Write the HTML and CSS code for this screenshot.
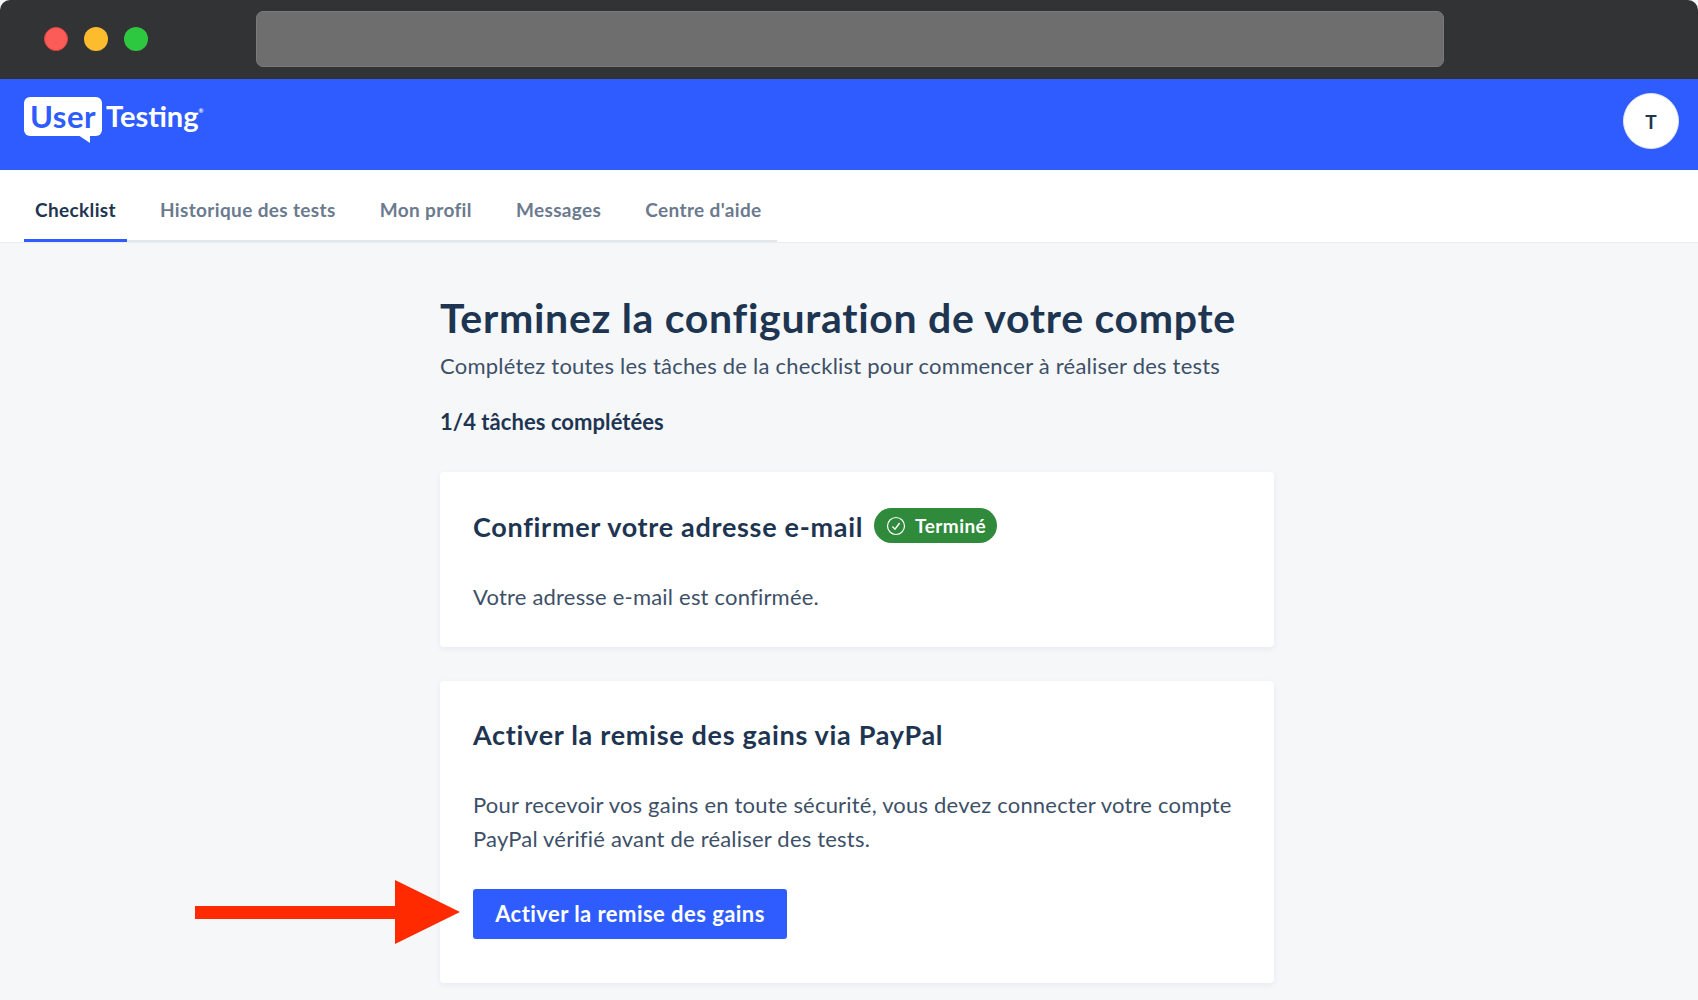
FILE: index.html
```html
<!DOCTYPE html>
<html lang="fr">
<head>
    <meta charset="UTF-8">
    <title>UserTesting - Checklist</title>
    <link rel="stylesheet" href="styles.css">
</head>
<body>
    <div class="window-bar">
        <div class="lights">
            <span class="light light-red"></span>
            <span class="light light-yellow"></span>
            <span class="light light-green"></span>
        </div>
        <div class="url-bar"></div>
    </div>

    <header class="top-bar">
        <div class="logo">
            <span class="logo-user">User</span>
            <span class="logo-testing">Testing<sup class="logo-mark">®</sup></span>
        </div>
        <div class="avatar">T</div>
    </header>

    <nav class="tabs">
        <div class="tab-list">
            <a class="tab active">Checklist</a>
            <a class="tab">Historique des tests</a>
            <a class="tab">Mon profil</a>
            <a class="tab">Messages</a>
            <a class="tab">Centre d'aide</a>
        </div>
    </nav>

    <main class="content">
        <h1>Terminez la configuration de votre compte</h1>
        <p class="subtitle">Complétez toutes les tâches de la checklist pour commencer à réaliser des tests</p>
        <p class="progress">1/4 tâches complétées</p>

        <section class="card">
            <div class="card-head">
                <h2>Confirmer votre adresse e-mail</h2>
                <span class="badge">
                    <svg class="badge-icon" viewBox="0 0 20 20" fill="none" stroke="currentColor">
                        <circle cx="10" cy="10" r="8.5" stroke-width="1.2"/>
                        <path d="M6.4 10.4l2.6 2.8 4.6-6.2" stroke-width="1.4"/>
                    </svg>
                    Terminé
                </span>
            </div>
            <p class="card-text">Votre adresse e-mail est confirmée.</p>
        </section>

        <section class="card card-paypal">
            <div class="card-head">
                <h2>Activer la remise des gains via PayPal</h2>
            </div>
            <p class="card-text">Pour recevoir vos gains en toute sécurité, vous devez connecter votre compte PayPal vérifié avant de réaliser des tests.</p>
            <button class="primary-button">Activer la remise des gains</button>
            <svg class="arrow" viewBox="0 0 265 64">
                <path d="M0 26h200V0l65 32-65 32V39H0z" fill="#ff2a00"/>
            </svg>
        </section>
    </main>
</body>
</html>
```

FILE: styles.css
```css
:root {
    --blue: #2f5cff;
    --navy: #1e3552;
    --slate: #3d5068;
    --muted: #6b7a8e;
    --page-bg: #f5f7f9;
}

* {
    margin: 0;
    padding: 0;
    box-sizing: border-box;
}

body {
    font-family: Lato, "Open Sans", sans-serif;
    color: var(--navy);
    background-color: var(--page-bg);
    height: 1000px;
    overflow: hidden;
}

.window-bar {
    display: flex;
    align-items: center;
    height: 79px;
    padding: 0 254px 1px 44px;
    border-radius: 10px 10px 0 0;
    background-color: #323335;
}

.lights {
    display: flex;
    gap: 16px;
    margin-right: 108px;
}

.light {
    width: 24px;
    height: 24px;
    border-radius: 50%;
}

.light-red {
    background-color: #fc5c57;
    border: 1px solid #e0443e;
}

.light-yellow {
    background-color: #fdbb2e;
}

.light-green {
    background-color: #2ec840;
}

.url-bar {
    flex: 1;
    height: 56px;
    border-radius: 7px;
    background-color: #6e6e6e;
    border: 1px solid #7a7a7a;
}

.top-bar {
    display: flex;
    justify-content: space-between;
    align-items: flex-start;
    height: 91px;
    padding: 14px 19px 0 24px;
    background-color: var(--blue);
}

.logo {
    display: flex;
    align-items: flex-start;
    gap: 4px;
    padding-top: 4px;
}

.logo-user {
    position: relative;
    display: block;
    width: 78px;
    height: 39px;
    border-radius: 6px;
    background-color: white;
    color: var(--blue);
    font-size: 31px;
    font-weight: 700;
    line-height: 38px;
    letter-spacing: 0.5px;
    text-align: center;
}

.logo-user::after {
    content: "";
    position: absolute;
    left: 54px;
    top: 38px;
    border-top: 8px solid white;
    border-left: 12px solid transparent;
    border-right: 0 solid transparent;
}

.logo-testing {
    color: white;
    font-size: 29px;
    font-weight: 700;
    line-height: 38px;
}

.logo-mark {
    font-size: 6px;
    vertical-align: 14px;
    line-height: 0;
}

.avatar {
    display: flex;
    align-items: center;
    justify-content: center;
    width: 56px;
    height: 56px;
    border-radius: 50%;
    background-color: white;
    border: 1px solid #dfe5f5;
    font-size: 19px;
    font-weight: 700;
}

.tabs {
    height: 73px;
    padding-left: 24px;
    background-color: white;
    border-bottom: 1px solid #e8ebef;
}

.tab-list {
    display: flex;
    gap: 22px;
    width: 753px;
    height: 72px;
    border-bottom: 2px solid #e3e7ec;
}

.tab {
    height: 72px;
    padding: 0 11px;
    color: var(--muted);
    font-size: 19px;
    font-weight: 700;
    line-height: 80px;
    letter-spacing: 0.36px;
}

.tab.active {
    color: var(--navy);
    border-bottom: 3px solid var(--blue);
}

.content {
    width: 834px;
    margin-left: 440px;
    padding-top: 51px;
}

h1 {
    font-size: 41px;
    font-weight: 700;
    line-height: 48px;
    letter-spacing: 0.7px;
}

.subtitle {
    margin-top: 8px;
    color: var(--slate);
    font-size: 22px;
    line-height: 32px;
    letter-spacing: 0.22px;
}

.progress {
    margin-top: 26px;
    font-size: 22px;
    font-weight: 700;
    line-height: 28px;
    letter-spacing: 0.06px;
}

.card {
    position: relative;
    margin-top: 36px;
    padding: 37px 33px 33px;
    border-radius: 4px;
    background-color: white;
    box-shadow: 0 2px 6px rgba(28, 51, 80, 0.06);
}

.card-paypal {
    margin-top: 34px;
    padding-top: 36px;
    padding-bottom: 44px;
}

.card-head {
    display: flex;
    align-items: center;
    gap: 11px;
    height: 36px;
}

h2 {
    font-size: 27px;
    font-weight: 700;
    line-height: 36px;
    letter-spacing: 0.7px;
}

.badge {
    display: flex;
    align-items: center;
    gap: 9px;
    height: 35px;
    margin-bottom: 3px;
    padding: 0 11px 0 12px;
    border-radius: 18px;
    background-color: #2f8a3c;
    color: white;
    font-size: 19px;
    font-weight: 700;
    letter-spacing: 0.45px;
}

.badge-icon {
    width: 20px;
    height: 20px;
}

.card-text {
    margin-top: 35px;
    color: var(--slate);
    font-size: 22px;
    line-height: 34px;
    letter-spacing: 0.2px;
}

.primary-button {
    display: block;
    width: 314px;
    height: 50px;
    margin-top: 33px;
    padding-bottom: 2px;
    border: none;
    border-radius: 3px;
    background-color: var(--blue);
    color: white;
    font-family: inherit;
    font-size: 22px;
    font-weight: 700;
    letter-spacing: 0.45px;
}

/* annotation arrow, sits over the card edge */
.arrow {
    position: absolute;
    left: -245px;
    top: 199px;
    width: 265px;
    height: 64px;
}
```
